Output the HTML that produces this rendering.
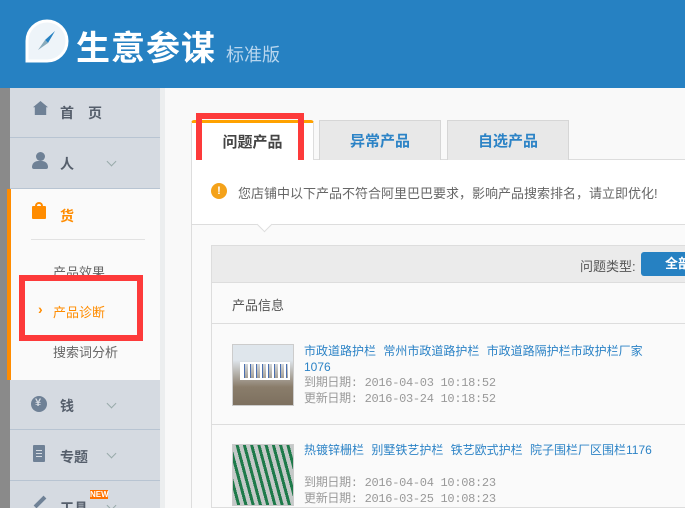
<!DOCTYPE html>
<html><head><meta charset="utf-8"><style>
*{margin:0;padding:0;box-sizing:border-box}
html,body{width:685px;height:508px;overflow:hidden}
body{position:relative;background:#f9f9f9;font-family:"Liberation Sans","Noto Sans CJK SC",sans-serif;font-size:12px;color:#555}
.a{position:absolute}
.hdr{left:0;top:0;width:685px;height:88px;background:#2681c2}
.strip{left:0;top:88px;width:10px;height:420px;background:#8a8a8a}
.sb{left:10px;top:88px;width:150px;height:420px;background:#d5dae1}
.row{position:absolute;left:10px;width:150px;border-bottom:1px solid #b8c4d2}
.lbl{position:absolute;font-size:14px;font-weight:bold;color:#555e6b}
.chev{position:absolute;width:7px;height:7px;border-right:1px solid #9aa;border-bottom:1px solid #9aa;transform:rotate(45deg)}
.ico{position:absolute;background:#6f8196}
.tab{position:absolute;top:120px;height:40px;background:#e8e8e8;border:1px solid #d6d6d6;border-bottom:none;font-size:15px;font-weight:bold;color:#2c83c6;text-align:center;line-height:42px}
.red{position:absolute;border:6px solid #fd3a3a}
.lnk{color:#2c83c6;font-size:12px;white-space:nowrap}
.dt{color:#999;font-family:"Liberation Mono","Noto Sans CJK SC",monospace;font-size:12px;letter-spacing:-0.3px;white-space:nowrap}
</style></head><body>
<div class="a hdr"></div>
<svg class="a" style="left:24px;top:18px" width="46" height="46" viewBox="0 0 46 46"><path d="M3 43 V23 A20 20 0 1 1 23 43 Z" fill="#eef4f9" stroke="#fff" stroke-width="3"/><path d="M31 13 L24 25 L21 22 Z" fill="#2681c2"/><path d="M14 32 L21 22 L24 25 Z" fill="#8ab"/></svg>
<div class="a" style="left:76px;top:21px;font-size:34px;font-weight:bold;color:#fff;letter-spacing:1px">生意参谋</div>
<div class="a" style="left:226px;top:41px;font-size:18px;color:#b8d6ee">标准版</div>
<div class="a strip"></div>
<div class="a sb"></div>
<div class="a" style="left:160px;top:88px;width:5px;height:420px;background:#eceeef"></div>
<div class="row" style="top:88px;height:50px"></div>
<div class="ico" style="left:33px;top:101px;width:15px;height:14px;clip-path:polygon(50% 0,100% 45%,88% 45%,88% 100%,12% 100%,12% 45%,0 45%)"></div>
<div class="lbl" style="left:60px;top:103px;letter-spacing:14px">首页</div>
<div class="row" style="top:138px;height:51px"></div>
<div class="ico" style="left:36px;top:152px;width:9px;height:9px;border-radius:50%"></div>
<div class="ico" style="left:32px;top:161px;width:16px;height:8px;border-radius:6px 6px 2px 2px"></div>
<div class="lbl" style="left:60px;top:154px">人</div><div class="chev" style="left:108px;top:158px"></div>
<div class="a" style="left:10px;top:189px;width:150px;height:191px;background:#fafafa"></div>
<div class="a" style="left:7px;top:189px;width:4px;height:191px;background:#ff8c00"></div>
<div class="a" style="left:32px;top:206px;width:14px;height:13px;background:#ff8c00;border-radius:1px"></div>
<div class="a" style="left:35px;top:202px;width:8px;height:7px;border:2px solid #ff8c00;border-bottom:none;border-radius:4px 4px 0 0"></div>
<div class="lbl" style="left:60px;top:206px;color:#ff8c00">货</div>
<div class="a" style="left:31px;top:239px;width:114px;height:1px;background:#e2e2e2"></div>
<div class="a" style="left:53px;top:262px;font-size:13px;color:#666">产品效果</div>
<div class="a" style="left:38px;top:301px;font-size:14px;color:#ff8c00;font-weight:bold">›</div>
<div class="a" style="left:53px;top:302px;font-size:13px;color:#ff8c00">产品诊断</div>
<div class="a" style="left:53px;top:342px;font-size:13px;color:#666">搜索词分析</div>
<div class="red" style="left:19px;top:275px;width:124px;height:66px"></div>
<div class="row" style="top:380px;height:50px"></div>
<div class="ico" style="left:31px;top:396px;width:16px;height:16px;border-radius:50%"></div>
<div class="a" style="left:35px;top:397px;font-size:11px;color:#d5dae1;font-weight:bold">¥</div>
<div class="lbl" style="left:60px;top:396px">钱</div><div class="chev" style="left:108px;top:400px"></div>
<div class="row" style="top:430px;height:51px"></div>
<div class="ico" style="left:33px;top:445px;width:12px;height:17px;border-radius:1px"></div>
<div class="a" style="left:36px;top:450px;width:6px;height:7px;border-top:1px solid #d5dae1;border-bottom:1px solid #d5dae1"></div>
<div class="a" style="left:36px;top:453px;width:6px;height:1px;background:#d5dae1"></div>
<div class="lbl" style="left:60px;top:447px">专题</div><div class="chev" style="left:108px;top:450px"></div>
<div class="ico" style="left:33px;top:500px;width:14px;height:4px;transform:rotate(-45deg)"></div>
<div class="lbl" style="left:60px;top:498px">工具</div><div class="chev" style="left:108px;top:502px"></div>
<div class="a" style="left:90px;top:490px;width:18px;height:9px;background:#ff7300;color:#fff;font-size:8px;font-weight:bold;line-height:9px;text-align:center">NEW</div>
<div class="a" style="left:191px;top:159px;width:494px;height:349px;border-left:1px solid #ddd;border-top:1px solid #ddd;background:#fafafa"></div>
<div class="a" style="left:191px;top:120px;width:123px;height:41px;background:#fff;border:1px solid #ddd;border-top:3px solid #ffa200;border-bottom:none;border-radius:3px 3px 0 0;font-size:15px;font-weight:bold;color:#444;text-align:center;line-height:40px">问题产品</div>
<div class="tab" style="left:319px;width:122px">异常产品</div>
<div class="tab" style="left:447px;width:122px">自选产品</div>
<div class="red" style="left:196px;top:113px;width:108px;height:58px"></div>
<div class="a" style="left:192px;top:160px;width:493px;height:65px;background:#fff;border-bottom:1px solid #ddd"></div>
<div class="a" style="left:211px;top:183px;width:16px;height:16px;border-radius:50%;background:#f4a21a;color:#fff;font-size:11px;font-weight:bold;text-align:center;line-height:16px">!</div>
<div class="a" style="left:238px;top:183px;font-size:13px;color:#666;white-space:nowrap">您店铺中以下产品不符合阿里巴巴要求，影响产品搜索排名，请立即优化!</div>
<div class="a" style="left:259px;top:219px;width:11px;height:11px;background:#fff;border-right:1px solid #ddd;border-bottom:1px solid #ddd;transform:rotate(45deg)"></div>
<div class="a" style="left:211px;top:245px;width:474px;height:263px;border:1px solid #ddd;border-right:none;background:#fafafa"></div>
<div class="a" style="left:212px;top:246px;width:473px;height:37px;background:#ebebeb;border-bottom:1px solid #ddd"></div>
<div class="a" style="left:580px;top:256px;font-size:13px;color:#555">问题类型:</div>
<div class="a" style="left:641px;top:252px;width:60px;height:24px;background:#2681c2;border-radius:3px;color:#fff;font-size:13px;font-weight:bold;line-height:24px;padding-left:24px;white-space:nowrap">全部</div>
<div class="a" style="left:232px;top:295px;font-size:13px;color:#555">产品信息</div>
<div class="a" style="left:212px;top:323px;width:473px;height:1px;background:#ddd"></div>
<div class="a" style="left:232px;top:344px;width:62px;height:62px;background:linear-gradient(#dfe6ec 0,#dfe6ec 25%,#8a7d6b 70%,#7d705f 100%);border:1px solid #ccc"></div>
<div class="a" style="left:240px;top:362px;width:50px;height:18px;border:2px solid #fff;background:repeating-linear-gradient(90deg,#fff 0 2px,#4a6fb0 2px 3px,transparent 3px 6px)"></div>
<div class="a lnk" style="left:304px;top:343px;line-height:16px;word-spacing:4px">市政道路护栏 常州市政道路护栏 市政道路隔护栏市政护栏厂家<br>1076</div>
<div class="a dt" style="left:304px;top:375px;line-height:16px">到期日期: 2016-04-03 10:18:52<br>更新日期: 2016-03-24 10:18:52</div>
<div class="a" style="left:212px;top:424px;width:473px;height:1px;background:#ddd"></div>
<div class="a" style="left:232px;top:444px;width:62px;height:62px;background:repeating-linear-gradient(75deg,#c4c9c8 0 4px,#1e7a4a 4px 7px);border:1px solid #ccc"></div>
<div class="a lnk" style="left:304px;top:442px;line-height:16px;word-spacing:4px">热镀锌栅栏 别墅铁艺护栏 铁艺欧式护栏 院子围栏厂区围栏1176</div>
<div class="a dt" style="left:304px;top:475px;line-height:16px">到期日期: 2016-04-04 10:08:23<br>更新日期: 2016-03-25 10:08:23</div>
</body></html>
